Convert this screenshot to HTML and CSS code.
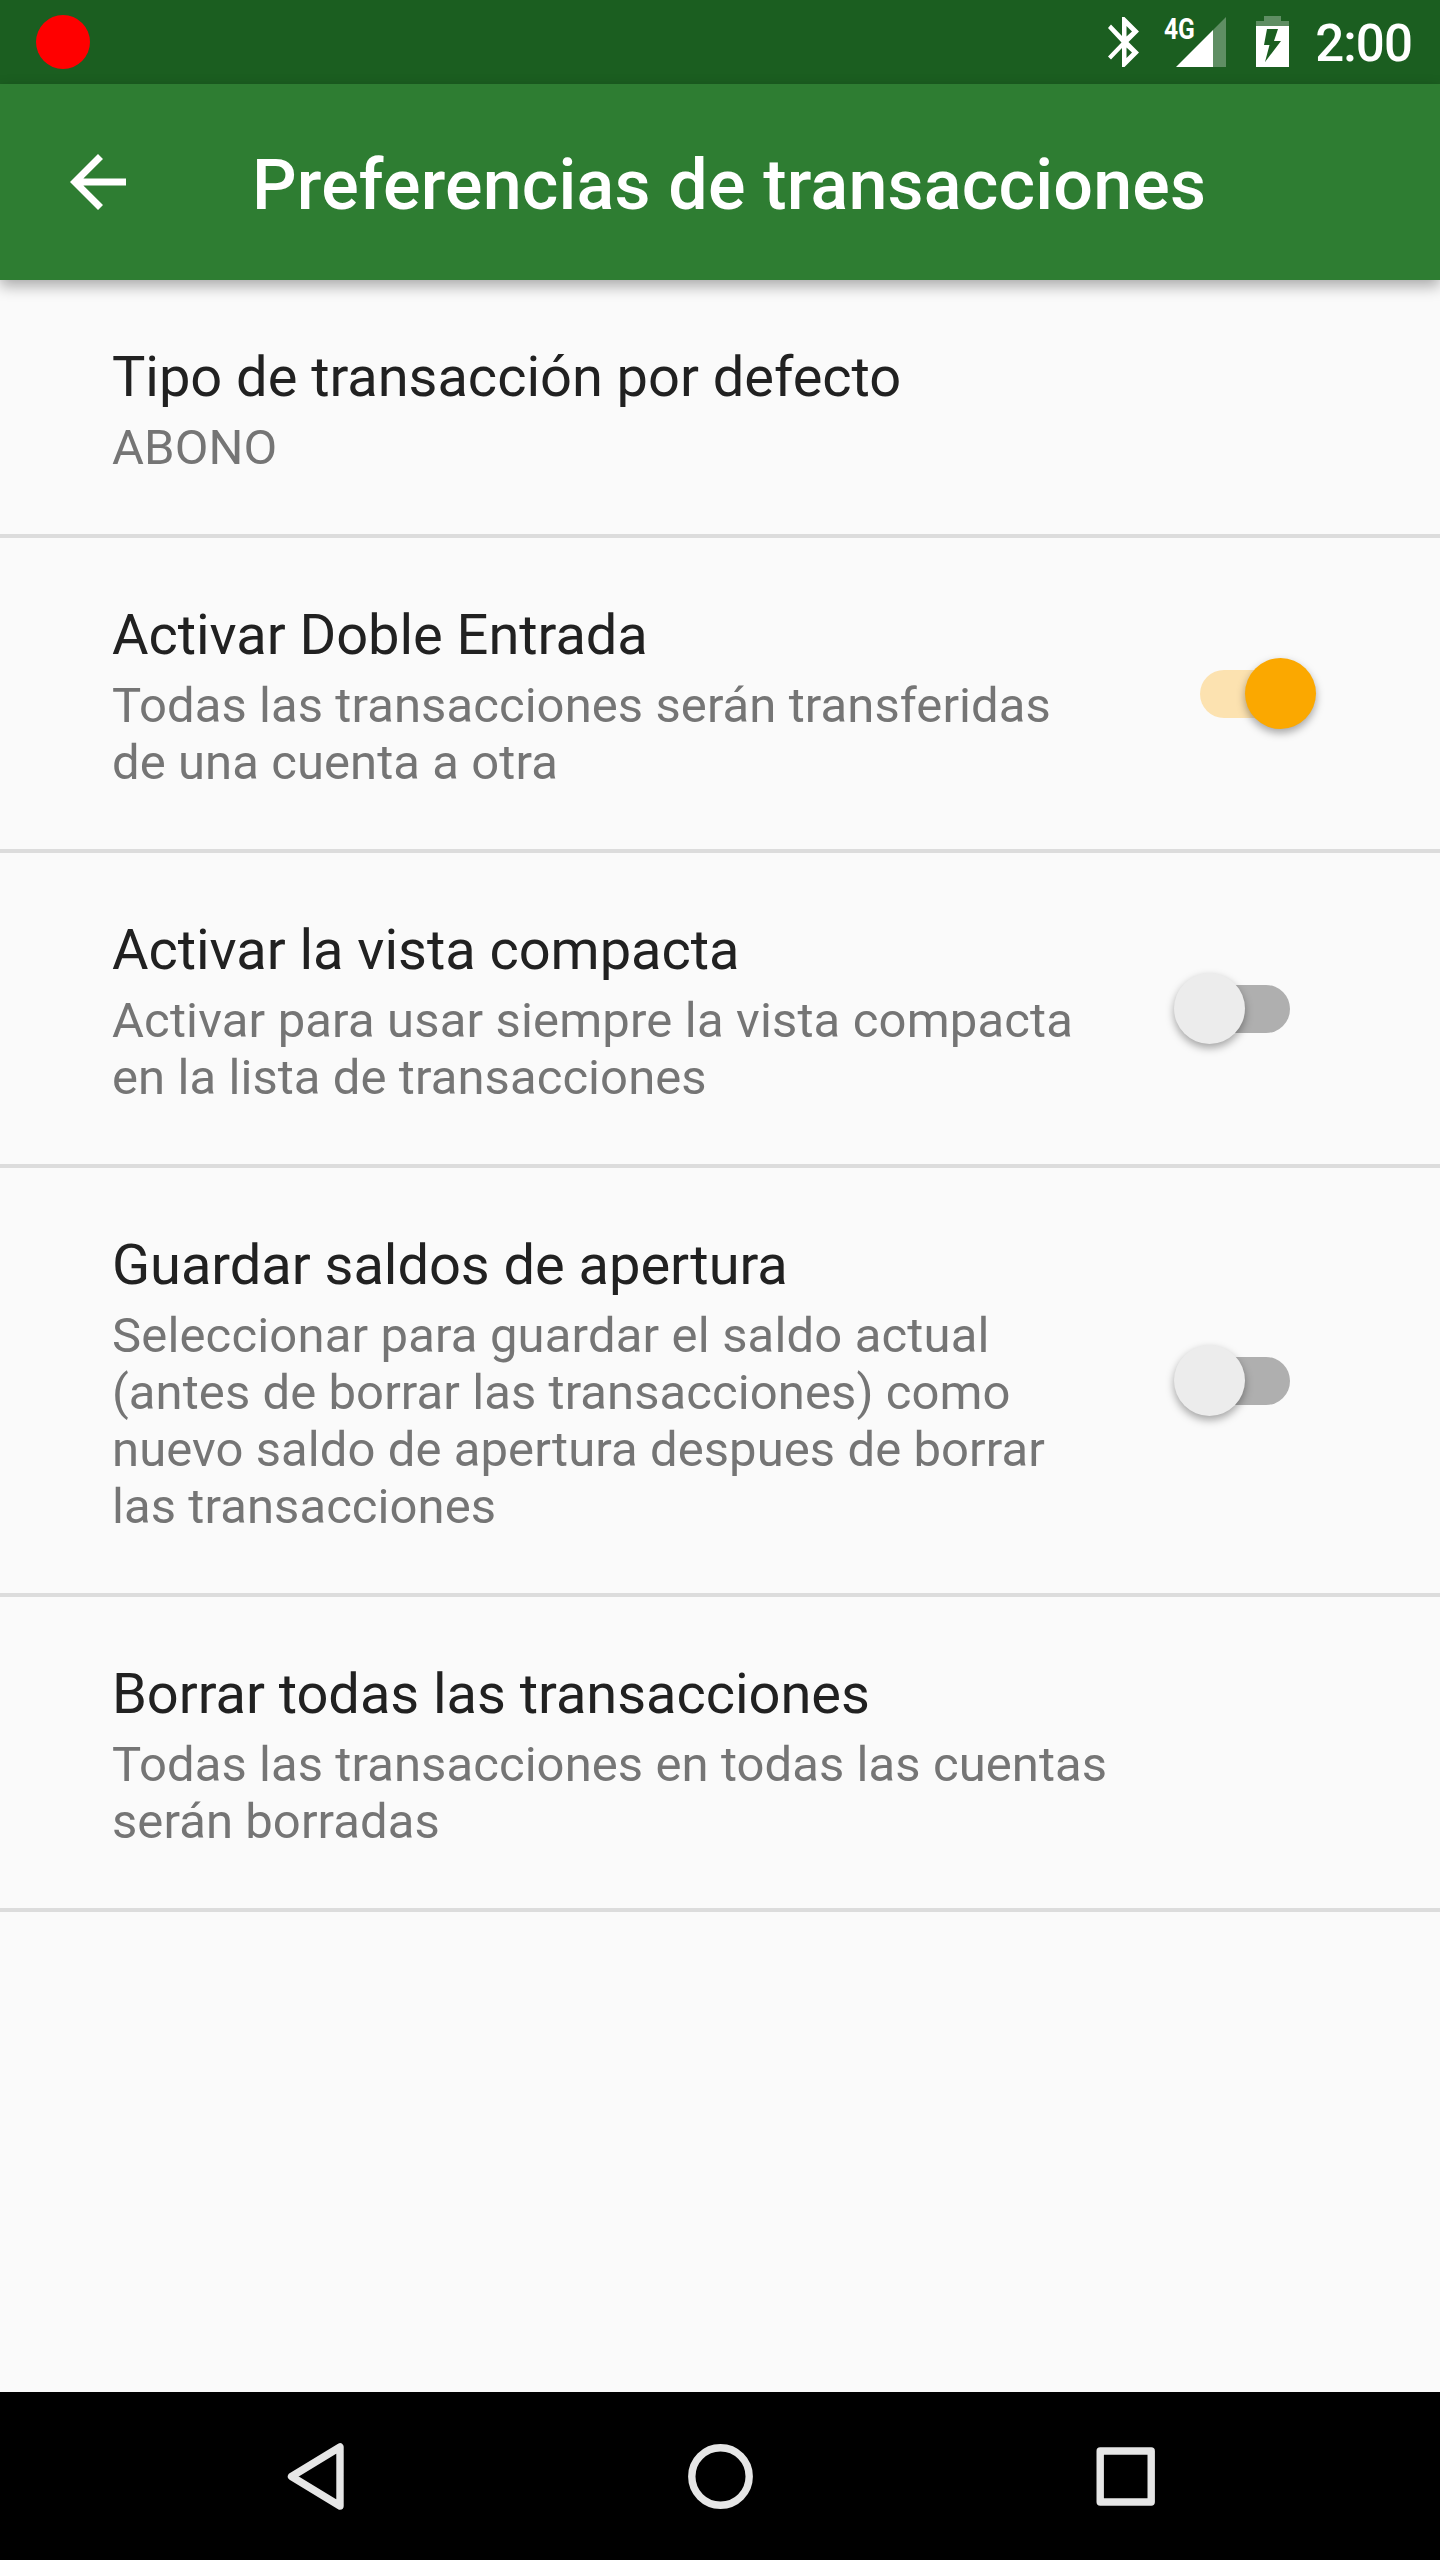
FILE: index.html
```html
<!DOCTYPE html>
<html lang="es">
<head>
<meta charset="utf-8">
<title>Preferencias de transacciones</title>
<link rel="stylesheet" href="styles.css">
</head>
<body>
<div class="screen">
  <div class="status-bar">
    <span class="record-dot"></span>
    <div class="status-icons">
      <svg class="icon-bluetooth" width="32" height="50" viewBox="0 0 32 50"><path fill="#fff" fill-rule="evenodd" d="M14 0h2.500L31 14.500 20.500 25 31 35.500 16.500 50H14V31L3 42.500 0 39.500 13.500 25.500 0 11 3 7.500 14 19zM18.500 9v10.500L24 14.500zM18.500 30.500V41L24 35.500z"/></svg>
      <div class="signal">
        <span class="network">4G</span>
        <svg width="50" height="50" viewBox="0 0 50 50"><path fill="#fff" fill-opacity=".3" d="M50 0v50H37V13z"/><path fill="#fff" d="M37 13v37H0z"/></svg>
      </div>
      <svg class="icon-battery" width="33" height="51" viewBox="0 0 33 51"><path fill="#fff" fill-opacity=".3" d="M8 0h17v5h8v5H0V5h8z"/><path fill="#fff" fill-rule="evenodd" d="M0 10h33v41H0zM11 13L8 29h5.500L9 46l16-21h-7l4-12z"/></svg>
      <span class="clock">2:00</span>
    </div>
  </div>
  <header class="app-bar">
    <svg class="back" width="56" height="56" viewBox="0 0 56 56"><path fill="#fff" d="M56 24.500v7H13.400L33 51.100 28 56 0 28 28 0l5 4.900L13.400 24.500z"/></svg>
    <h1 class="title">Preferencias de transacciones</h1>
  </header>
  <main class="preferences">
    <section class="row">
      <div class="text"><h2 class="name">Tipo de transacción por defecto</h2><p class="summary">ABONO</p></div>
    </section>
    <section class="row">
      <div class="text"><h2 class="name">Activar Doble Entrada</h2><p class="summary">Todas las transacciones serán transferidas<br>de una cuenta a otra</p></div>
      <span class="switch on"><span class="thumb"></span></span>
    </section>
    <section class="row">
      <div class="text"><h2 class="name">Activar la vista compacta</h2><p class="summary"><span class="loose">Activar para usar siempre la vista compacta</span><br>en la lista de transacciones</p></div>
      <span class="switch"><span class="thumb"></span></span>
    </section>
    <section class="row">
      <div class="text"><h2 class="name">Guardar saldos de apertura</h2><p class="summary"><span class="loose">Seleccionar para guardar el saldo actual</span><br>(antes de borrar las transacciones) como<br>nuevo saldo de apertura despues de borrar<br>las transacciones</p></div>
      <span class="switch"><span class="thumb"></span></span>
    </section>
    <section class="row">
      <div class="text"><h2 class="name">Borrar todas las transacciones</h2><p class="summary">Todas las transacciones en todas las cuentas<br>serán borradas</p></div>
    </section>
  </main>
  <nav class="nav-bar">
    <svg width="80" height="80" viewBox="0 0 80 80"><path d="M65 11v59L16.500 40.500z"/></svg>
    <svg width="80" height="80" viewBox="0 0 80 80"><circle cx="40.500" cy="40.500" r="28.700"/></svg>
    <svg width="80" height="80" viewBox="0 0 80 80"><rect x="15.200" y="15" width="51" height="51"/></svg>
  </nav>
</div>
</body>
</html>
```
FILE: styles.css
```css
* { box-sizing: border-box; }
body { margin: 0; font-family: Roboto, sans-serif; }
.screen { width: 1440px; height: 2560px; display: flex; flex-direction: column; background: #fafafa; }
.status-bar { height: 84px; padding: 0 28px 0 36px; display: flex; align-items: center; justify-content: space-between; background: #1b5e20; }
.record-dot { width: 54px; height: 54px; border-radius: 50%; background: #f00; }
.status-icons { display: flex; height: 84px; align-items: flex-start; color: #fff; }
.icon-bluetooth { margin: 17px 24px 0 0; }
.signal { display: flex; margin-right: 30px; padding-top: 17px; }
.network { width: 31px; height: 24px; margin-right: -19px; font-size: 30px; line-height: 24px; font-weight: 700; transform: scaleX(.82); transform-origin: left; }
.icon-battery { margin: 16px 26px 0 0; }
.clock { font-size: 51px; line-height: 58px; font-weight: 500; letter-spacing: -.9px; padding-top: 15px; }
.app-bar { height: 196px; padding-left: 70px; display: flex; align-items: center; background: #2e7d32; box-shadow: 0 6px 14px rgba(0,0,0,.33); }
.title { margin: 6px 0 0 126px; font-size: 70px; line-height: 82px; font-weight: 500; letter-spacing: .2px; color: #fff; }
.preferences { flex: 1; }
.row { display: flex; align-items: center; justify-content: space-between; padding: 60px 108px 58px 112px; border-bottom: 4px solid #dcdcdc; }
.name { margin: 0 0 5px; font-size: 56px; line-height: 74px; font-weight: 400; letter-spacing: -.04px; color: #212121; }
.summary { margin: 0; font-size: 49px; line-height: 57px; letter-spacing: .08px; color: #757575; }
.loose { letter-spacing: .16px; }
.switch { width: 90px; height: 48px; margin: 0 42px 1px 0; border-radius: 24px; background: #afafaf; }
.thumb { display: block; width: 71px; height: 71px; margin: -12px 0 0 -26px; border-radius: 50%; background: #ececec; box-shadow: 0 4px 8px rgba(0,0,0,.35); }
.on { background: #fce2b0; }
.on .thumb { margin-left: 45px; background: #fba800; }
.nav-bar { height: 168px; padding: 0 275px; display: flex; align-items: center; justify-content: space-between; background: #000; }
.nav-bar path, .nav-bar circle, .nav-bar rect { fill: none; stroke: #e6e6e6; stroke-width: 7.4; stroke-linejoin: round; }
```
